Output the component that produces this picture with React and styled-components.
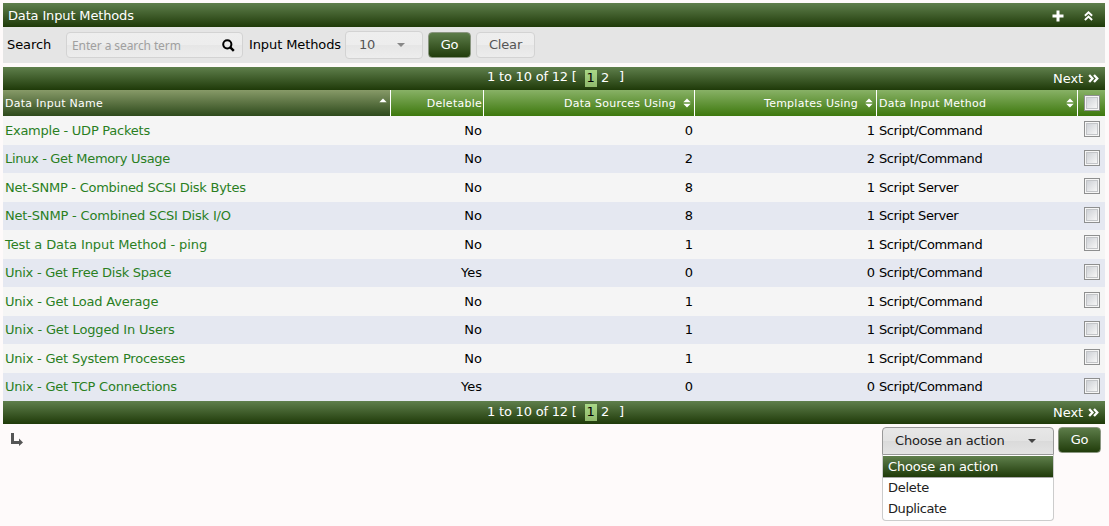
import React from 'react';
import styled, { createGlobalStyle, css } from 'styled-components';

const Global = createGlobalStyle`
  * { box-sizing: border-box; }
  body {
    margin: 0;
    background: #fefafa;
    font: 13px/16px "DejaVu Sans", Verdana, sans-serif;
    color: #000;
    overflow: hidden;
  }
`;

const darkGreen = 'linear-gradient(#5f7f4c, #1f3a09)';
const paleGlass = 'linear-gradient(#eeeeee 0, #ededed 50%, #e6e6e6 50%, #ededed 100%)';

const Page = styled.main`
  width: 1102px;
  height: 526px;
  margin-left: 3px;
  padding-top: 3px;
`;

const TitleBar = styled.header`
  display: flex;
  align-items: center;
  height: 24px;
  padding: 1px 12px 0 5px;
  background: ${darkGreen};
  color: #fff;
`;

const Title = styled.span`
  flex: 1;
  padding-top: 1px;
  letter-spacing: -0.15px;
`;

const TitleIcons = styled.div`
  display: flex;
  align-items: center;
  gap: 20px;
`;

const FilterBar = styled.div`
  display: flex;
  align-items: center;
  height: 36px;
  margin-bottom: 4px;
  padding-left: 4px;
  background: #e5e5e5;
`;

const Label = styled.label`
  width: ${p => p.$w}px;
  letter-spacing: -0.1px;
  white-space: nowrap;
`;

const SearchBox = styled.div`
  display: flex;
  align-items: center;
  justify-content: space-between;
  width: 177px;
  height: 26px;
  margin-right: 6px;
  padding: 1px 7px 0 5px;
  border: 1px solid #d3d3d3;
  border-radius: 4px;
  background: ${paleGlass};
  color: #a0a0a0;
  font: 12px/16px "Noto Sans", sans-serif;
  letter-spacing: -0.1px;
`;

const Select = styled.div`
  display: flex;
  align-items: center;
  justify-content: space-between;
  width: ${p => p.$w}px;
  height: 28px;
  padding: 0 17px 0 13px;
  border: 1px solid #d3d3d3;
  border-radius: 4px;
  background: ${paleGlass};
  color: #555;
  letter-spacing: -0.18px;
  ${p => p.$open && css`
    padding-left: 12px;
    border-color: #999;
    border-radius: 4px 4px 0 0;
    background: linear-gradient(#e7e7e7 0, #e2e2e2 50%, #dadada 50%, #e3e3e3 100%);
    color: #212121;
  `}
`;

const Caret = styled.i`
  border: 4px solid transparent;
  border-top-color: ${p => p.$c};
  border-bottom: 0;
`;

const Button = styled.button`
  width: ${p => p.$w}px;
  height: 26px;
  margin-left: ${p => p.$ml}px;
  padding: 0;
  border: 1px solid ${p => (p.$primary ? '#8a9680' : '#d3d3d3')};
  border-radius: 4px;
  background: ${p => (p.$primary ? darkGreen : paleGlass)};
  background-origin: border-box;
  color: ${p => (p.$primary ? '#fff' : '#555')};
  font: inherit;
  letter-spacing: -0.15px;
`;

const Nav = styled.nav`
  display: grid;
  grid-template-columns: 484px 1fr auto;
  height: 23px;
  padding-right: 6px;
  background: ${darkGreen};
  color: #fff;
`;

const Pages = styled.div`
  grid-column: 2;
  display: flex;
  padding-top: 3px;
  white-space: pre;
`;

const PageText = styled.span`
  margin-top: ${p => (p.$raised ? -1 : 0)}px;
  letter-spacing: -0.2px;
`;

const PageNo = styled.span`
  width: 12px;
  height: 17px;
  margin-right: 2.5px;
  padding-left: 2px;
  ${p => p.$current && css`
    background: linear-gradient(#a9d887, #90b86c);
    color: #000;
  `}
  & + & { margin-right: 0; }
`;

const Next = styled.div`
  display: flex;
  align-items: center;
  gap: 5px;
  letter-spacing: -0.1px;
`;

const Grid = styled.div`
  display: grid;
  grid-template-columns: 388px 93px 211px 182px 201px 27px;
  height: 28.5px;
`;

const HeadRow = styled(Grid)`
  height: 26px;
`;

const BodyRow = styled(Grid)`
  background: ${p => (p.$odd ? '#e5e8f1' : '#f5f5f5')};
`;

const HeadCell = styled.div`
  display: flex;
  align-items: center;
  justify-content: ${p => (p.$right ? 'flex-end' : 'space-between')};
  gap: 7px;
  padding: 0 ${p => p.$pr ?? 3}px 0 2px;
  border-right: 1px solid #fff;
  background: ${p => (p.$sorted ? 'linear-gradient(#879a68, #2e4a1c)' : 'linear-gradient(#88b166, #3d780d)')};
  color: #fff;
  font-size: 11px;
  letter-spacing: 0.25px;
  white-space: nowrap;
  &:last-child { border-right: 0; }
`;

const HeadText = styled.span`
  padding-top: 2px;
`;

const Cell = styled.div`
  padding: 6.5px 2px 0;
  text-align: ${p => (p.$right ? 'right' : 'left')};
  color: ${p => (p.$link ? '#2a7f1f' : '#000')};
  letter-spacing: ${p => p.$ls || 0}px;
  white-space: nowrap;
`;

const Check = styled.span`
  display: block;
  width: 16px;
  height: 16px;
  margin: ${p => p.$m};
  border: 1px solid #8e8f8f;
  box-shadow: inset 0 0 0 1px #f6f6f6, inset 0 0 0 2px #c3c5c8;
  background: linear-gradient(135deg, #cfd2d7 15%, #f6f6f6 85%);
`;

const Footer = styled.footer`
  display: flex;
  align-items: flex-start;
  padding: 3px 4px 0 8px;
`;

const Arrow = styled.svg`
  margin: 6px auto 0 0;
`;

const ActionSelect = styled.div`
  position: relative;
`;

const Menu = styled.div`
  position: absolute;
  top: 28px;
  left: 0;
  width: 172px;
  height: 66px;
  padding-top: 1px;
  border: 1px solid #ccc;
  border-top: 0;
  border-radius: 0 0 4px 4px;
  background: #fff;
`;

const Option = styled.div`
  height: 21px;
  padding: 2px 5px 0;
  color: #212121;
  letter-spacing: ${p => p.$ls}px;
  ${p => p.$active && css`
    height: 22px;
    padding-top: 3px;
    background: ${darkGreen};
    border-bottom: 1px solid #aaa;
    color: #fff;
  `}
`;

const SortBoth = () => (
  <svg width="8" height="10" viewBox="0 0 8 10" fill="#fff"><path d="M.3 4.200L4 .4l3.700 3.800zM.3 5.800h7.400L4 9.600z" /></svg>
);

const SortUp = () => (
  <svg width="8" height="10" viewBox="0 0 8 10" fill="#fff"><path d="M.3 4.200L4 .6l3.700 3.600z" /></svg>
);

const rows = [
  ['Example - UDP Packets', 'No', 0, 1, 'Script/Command', -0.25],
  ['Linux - Get Memory Usage', 'No', 2, 2, 'Script/Command', -0.33],
  ['Net-SNMP - Combined SCSI Disk Bytes', 'No', 8, 1, 'Script Server', -0.26],
  ['Net-SNMP - Combined SCSI Disk I/O', 'No', 8, 1, 'Script Server', -0.18],
  ['Test a Data Input Method - ping', 'No', 1, 1, 'Script/Command', -0.09],
  ['Unix - Get Free Disk Space', 'Yes', 0, 0, 'Script/Command', -0.25],
  ['Unix - Get Load Average', 'No', 1, 1, 'Script/Command', -0.21],
  ['Unix - Get Logged In Users', 'No', 1, 1, 'Script/Command', -0.16],
  ['Unix - Get System Processes', 'No', 1, 1, 'Script/Command', -0.22],
  ['Unix - Get TCP Connections', 'Yes', 0, 0, 'Script/Command', -0.23],
];

const Pager = ({ raised }) => (
  <Nav>
    <Pages>
      <PageText $raised={raised}>1 to 10 of 12 [  </PageText>
      <PageNo $current>1</PageNo>
      <PageNo>2</PageNo>
      <PageText $raised={raised}>  ]</PageText>
    </Pages>
    <Next>
      Next
      <svg width="11" height="9" viewBox="0 0 11 9" fill="none" stroke="#fff" strokeWidth="2.300"><path d="M1.200 1l3.300 3.500L1.200 8M6 1l3.300 3.500L6 8" /></svg>
    </Next>
  </Nav>
);

export default function App() {
  return (
    <>
      <Global />
      <Page>
        <TitleBar>
          <Title>Data Input Methods</Title>
          <TitleIcons>
            <svg width="12" height="12" viewBox="0 0 12 12" fill="#fff"><path d="M4.500 .5h3v4h4v3h-4v4h-3v-4h-4v-3h4z" /></svg>
            <svg width="9" height="10" viewBox="0 0 9 10" fill="none" stroke="#fff" strokeWidth="1.900"><path d="M.9 4.800l3.600-3.500 3.600 3.500M.9 9l3.600-3.500L8.100 9" /></svg>
          </TitleIcons>
        </TitleBar>
        <FilterBar>
          <Label $w={59}>Search</Label>
          <SearchBox>
            Enter a search term
            <svg width="13" height="13" viewBox="0 0 13 13" fill="none" stroke="#000"><circle cx="5.300" cy="5.300" r="4.100" strokeWidth="2" /><path d="M8.300 8.300l3.500 3.500" strokeWidth="2.500" /></svg>
          </SearchBox>
          <Label $w={96}>Input Methods</Label>
          <Select $w={78}>10<Caret $c="#888" /></Select>
          <Button $w={43} $ml={5} $primary>Go</Button>
          <Button $w={59} $ml={5}>Clear</Button>
        </FilterBar>
        <Pager raised />
        <HeadRow>
          <HeadCell $sorted><HeadText>Data Input Name</HeadText><SortUp /></HeadCell>
          <HeadCell $right $pr={1}><HeadText>Deletable</HeadText></HeadCell>
          <HeadCell $right><HeadText>Data Sources Using</HeadText><SortBoth /></HeadCell>
          <HeadCell $right><HeadText>Templates Using</HeadText><SortBoth /></HeadCell>
          <HeadCell><HeadText>Data Input Method</HeadText><SortBoth /></HeadCell>
          <HeadCell><Check $m="0 0 0 4px" /></HeadCell>
        </HeadRow>
        <div>
          {rows.map(([name, del, ds, tpl, method, ls], i) => (
            <BodyRow key={name} $odd={i % 2 === 1}>
              <Cell $link $ls={ls}>{name}</Cell>
              <Cell $right>{del}</Cell>
              <Cell $right>{ds}</Cell>
              <Cell $right>{tpl}</Cell>
              <Cell $ls={-0.4}>{method}</Cell>
              <Check $m="5px 0 0 6px" />
            </BodyRow>
          ))}
        </div>
        <Pager />
        <Footer>
          <Arrow width="13" height="13" viewBox="0 0 13 13" fill="#555"><path d="M0 0h3v8h5V5.500L12 9.500 8 13v-2H0z" /></Arrow>
          <ActionSelect>
            <Select $w={172} $open>Choose an action<Caret $c="#444" /></Select>
            <Menu>
              <Option $active $ls={-0.15}>Choose an action</Option>
              <Option $ls={-0.3}>Delete</Option>
              <Option $ls={-0.4}>Duplicate</Option>
            </Menu>
          </ActionSelect>
          <Button $w={43} $ml={4} $primary>Go</Button>
        </Footer>
      </Page>
    </>
  );
}
